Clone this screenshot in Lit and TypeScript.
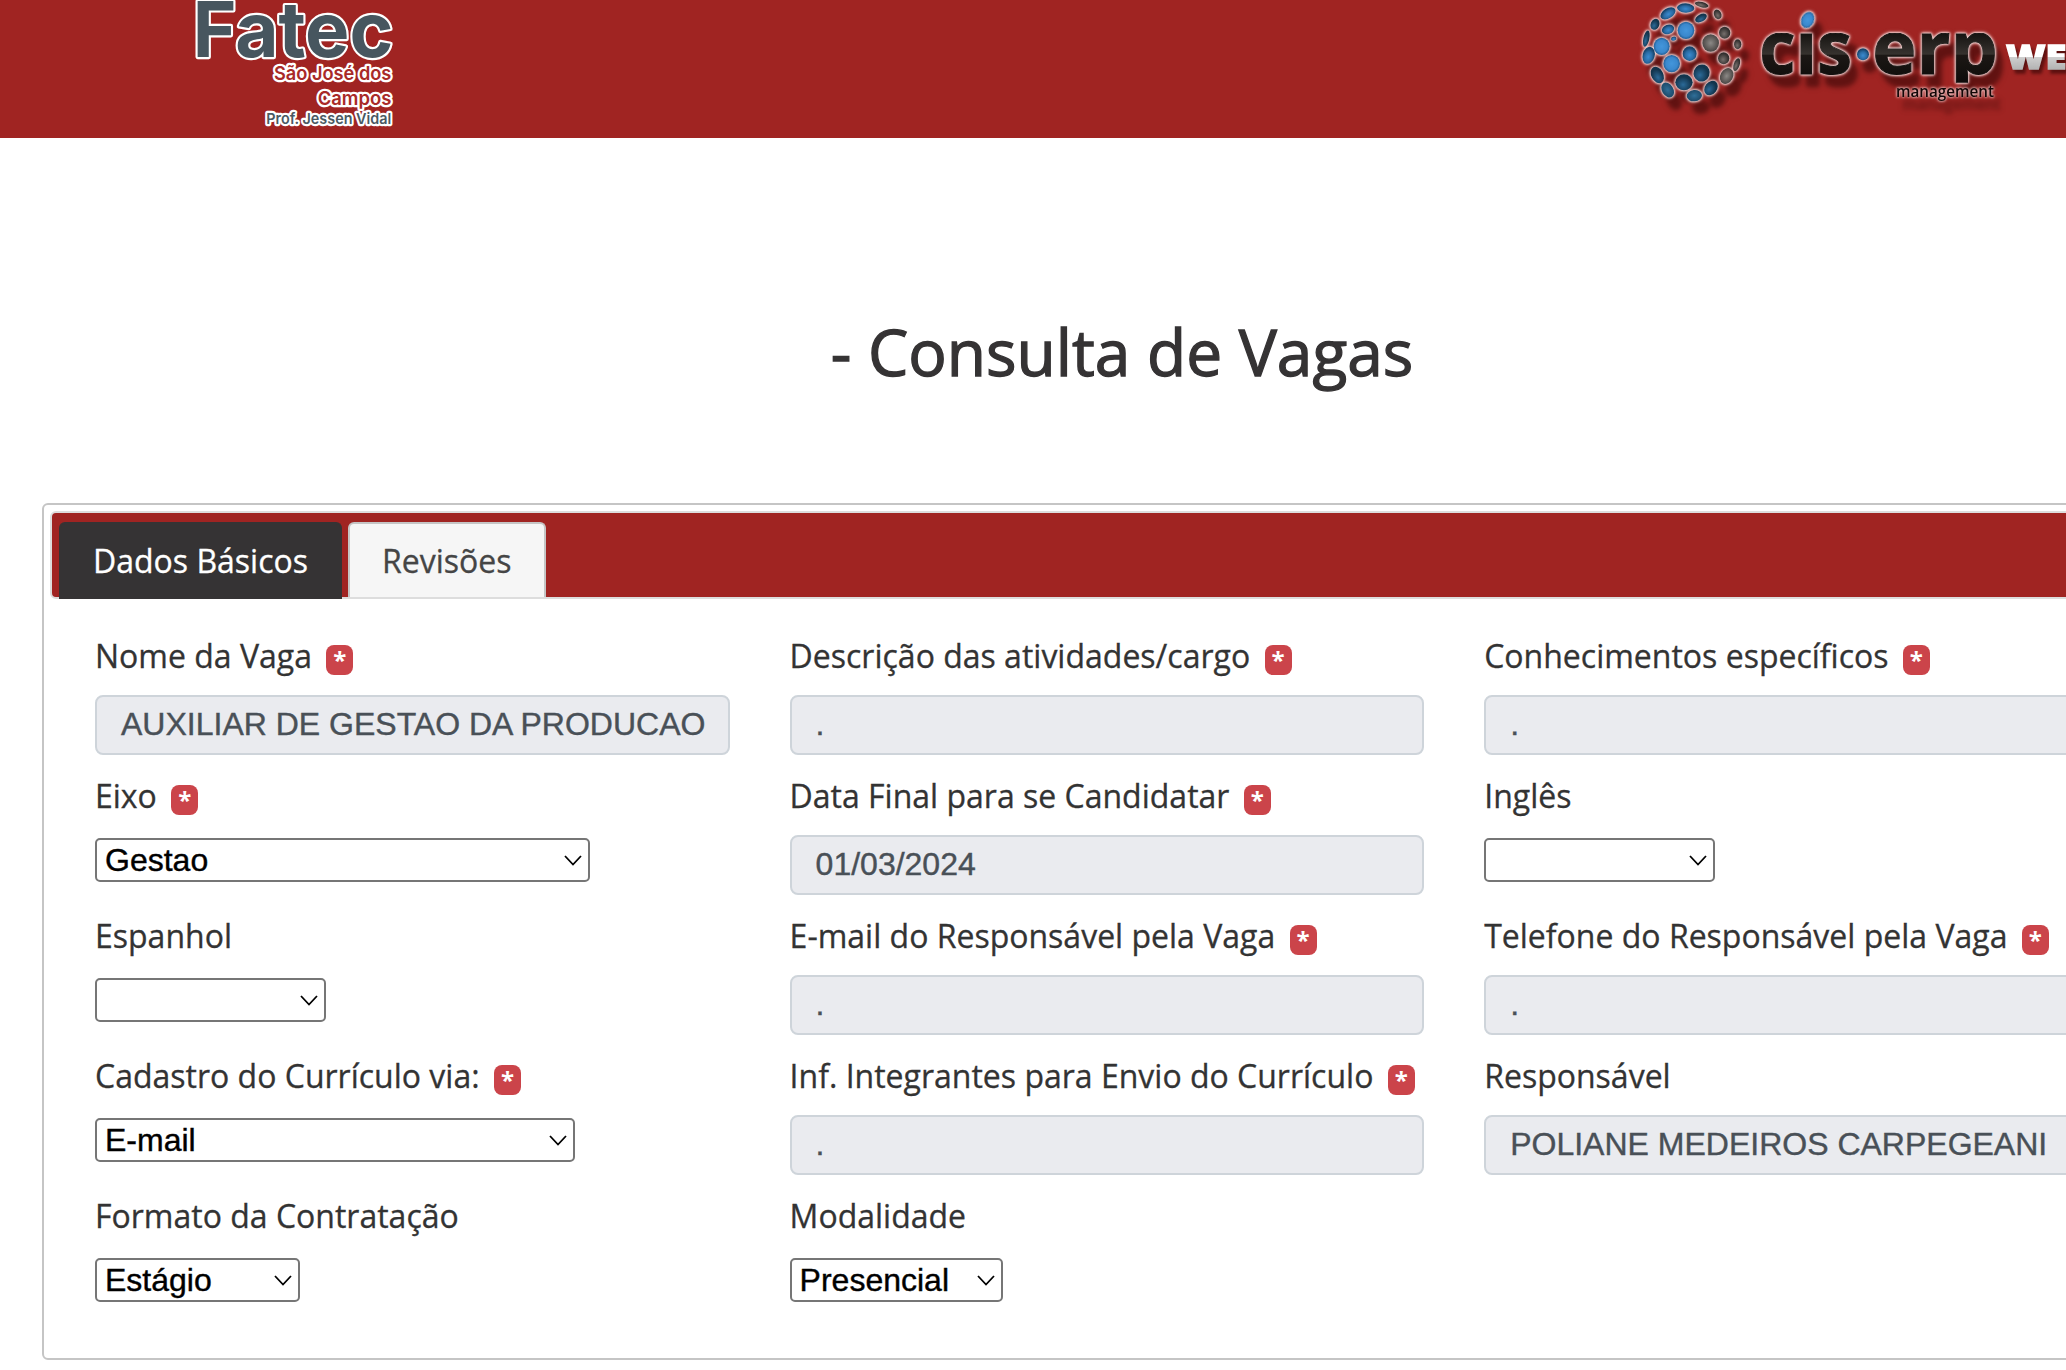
import { LitElement, html, css, svg, nothing } from "lit";
import { customElement, property } from "lit/decorators.js";

type Kind = "input" | "select";

interface Field {
  label: string;
  kind: Kind;
  value: string;
  required?: boolean;
  width?: number;
}

const FIELDS: Field[] = [
  { label: "Nome da Vaga", kind: "input", value: "AUXILIAR DE GESTAO DA PRODUCAO", required: true },
  { label: "Descrição das atividades/cargo", kind: "input", value: ".", required: true },
  { label: "Conhecimentos específicos", kind: "input", value: ".", required: true },
  { label: "Eixo", kind: "select", value: "Gestao", required: true, width: 495 },
  { label: "Data Final para se Candidatar", kind: "input", value: "01/03/2024", required: true },
  { label: "Inglês", kind: "select", value: "", width: 231 },
  { label: "Espanhol", kind: "select", value: "", width: 231 },
  { label: "E-mail do Responsável pela Vaga", kind: "input", value: ".", required: true },
  { label: "Telefone do Responsável pela Vaga", kind: "input", value: ".", required: true },
  { label: "Cadastro do Currículo via:", kind: "select", value: "E-mail", required: true, width: 480 },
  { label: "Inf. Integrantes para Envio do Currículo", kind: "input", value: ".", required: true },
  { label: "Responsável", kind: "input", value: "POLIANE MEDEIROS CARPEGEANI" },
  { label: "Formato da Contratação", kind: "select", value: "Estágio", width: 205 },
  { label: "Modalidade", kind: "select", value: "Presencial", width: 213 },
];

/* Globe dots: cx, cy, rx, ry, rotation, fill */
const DOTS: [number, number, number, number, number, string][] = [
  [197, 24, 26, 14, 3, "blue"],
  [245, 14, 21, 8, 14, "grey"],
  [144, 40, 25, 15, -32, "blue"],
  [293, 43, 11, 15, -25, "grey"],
  [243, 54, 19, 11, -28, "navy"],
  [105, 73, 13, 17, 22, "navy"],
  [144, 88, 19, 14, -20, "blue"],
  [198, 91, 25, 26, 0, "bright"],
  [79, 116, 9, 25, 12, "navy"],
  [161, 116, 8, 6, -10, "blue"],
  [272, 129, 25, 26, 0, "silver"],
  [314, 98, 17, 18, 0, "grey"],
  [353, 133, 11, 15, 0, "grey"],
  [125, 139, 24, 26, 0, "bright"],
  [86, 166, 18, 26, 15, "blue"],
  [209, 161, 21, 22, 0, "blue"],
  [155, 191, 25, 26, 0, "bright"],
  [311, 175, 17, 18, 0, "grey"],
  [350, 194, 9, 20, 18, "grey"],
  [245, 219, 24, 26, 20, "navy"],
  [112, 225, 18, 26, -28, "navy"],
  [320, 228, 19, 25, 28, "silver"],
  [192, 247, 26, 24, 0, "navy"],
  [273, 264, 18, 24, 38, "navy"],
  [143, 270, 17, 24, -32, "teal"],
  [223, 287, 23, 17, -5, "teal"],
];

@customElement("fatec-logo")
export class FatecLogo extends LitElement {
  static styles = css`
    :host { display: block; width: 230px; height: 138px; }
    svg { display: block; overflow: visible; }
    text {
      font-family: Inter, "Liberation Sans", sans-serif;
      font-weight: 600;
      paint-order: stroke;
      stroke: #fff;
      stroke-linejoin: round;
    }
    .name { font-size: 229px; font-weight: 700; fill: #47565f; stroke-width: 13px; }
    .city { font-size: 58px; fill: #a92a28; stroke-width: 14px; }
    .prof { font-size: 45px; fill: #4a5962; stroke-width: 13px; }
  `;

  render() {
    return html`
      <svg width="230" height="138" viewBox="0 0 690 414" role="img">
        <text class="name" x="38" y="172" textLength="602" lengthAdjust="spacingAndGlyphs">Fatec</text>
        <text class="city" x="282" y="241" textLength="352" lengthAdjust="spacingAndGlyphs">São José dos</text>
        <text class="city" x="413" y="314" textLength="221" lengthAdjust="spacingAndGlyphs">Campos</text>
        <text class="prof" x="259" y="372" textLength="375" lengthAdjust="spacingAndGlyphs">Prof. Jessen Vidal</text>
      </svg>
    `;
  }
}

@customElement("cis-logo")
export class CisLogo extends LitElement {
  static styles = css`
    :host { display: block; width: 500px; height: 138px; }
    svg { display: block; }
    text { font-family: "Open Sans", "Noto Sans", sans-serif; }
    .word { font-size: 222px; font-weight: 700; }
    .sub { font-size: 47px; font-weight: 600; }
    .web { font-size: 100px; font-weight: 800; }
    .lift {
      filter: drop-shadow(0 0 3px #f8e2e1) drop-shadow(0 0 3px rgba(246, 220, 219, 0.9))
        drop-shadow(0 0 4px rgba(246, 220, 219, 0.5)) drop-shadow(20px 34px 7px rgba(45, 4, 4, 0.55));
    }
    .lift-low {
      filter: drop-shadow(0 0 3px #f4d0cf) drop-shadow(0 0 4px rgba(246, 220, 219, 0.7))
        drop-shadow(20px 38px 6px rgba(45, 4, 4, 0.3));
    }
    .lift-web { filter: drop-shadow(8px 12px 5px rgba(45, 4, 4, 0.6)); }
  `;

  render() {
    return html`
      <svg width="500" height="138" viewBox="0 0 1500 414" role="img">
        <defs>
          <radialGradient id="bright"><stop offset="0" stop-color="#4396dc" /><stop offset=".7" stop-color="#3a88cd" /><stop offset="1" stop-color="#235f96" /></radialGradient>
          <radialGradient id="blue" cx=".5" cy=".6"><stop offset="0" stop-color="#3a8bd0" /><stop offset=".6" stop-color="#2a6ca5" /><stop offset="1" stop-color="#18456c" /></radialGradient>
          <radialGradient id="navy" cx=".45" cy=".65"><stop offset="0" stop-color="#2b6a98" /><stop offset="1" stop-color="#12344c" /></radialGradient>
          <radialGradient id="teal"><stop offset="0" stop-color="#2f6f99" /><stop offset="1" stop-color="#1d4a69" /></radialGradient>
          <radialGradient id="grey" cx=".45" cy=".6"><stop offset="0" stop-color="#77706d" /><stop offset="1" stop-color="#33302f" /></radialGradient>
          <radialGradient id="silver"><stop offset="0" stop-color="#8c8986" /><stop offset="1" stop-color="#4b4745" /></radialGradient>
          <linearGradient id="ink" gradientUnits="userSpaceOnUse" x1="0" y1="100" x2="0" y2="250">
            <stop offset="0" stop-color="#151311" /><stop offset=".42" stop-color="#37332f" />
            <stop offset=".43" stop-color="#1c1815" /><stop offset="1" stop-color="#0d0b0a" />
          </linearGradient>
          <linearGradient id="steel" gradientUnits="userSpaceOnUse" x1="0" y1="135" x2="0" y2="207">
            <stop offset="0" stop-color="#fff" /><stop offset=".48" stop-color="#fff" />
            <stop offset=".5" stop-color="#cfcfcf" /><stop offset="1" stop-color="#b4b4b4" />
          </linearGradient>
          <clipPath id="body"><rect x="400" y="99" width="760" height="149" /></clipPath>
        </defs>

        <g class="lift">
          ${DOTS.map(
            ([cx, cy, rx, ry, rot, fill]) => svg`
              <ellipse cx=${cx} cy=${cy} rx=${rx} ry=${ry} fill=${`url(#${fill})`}
                transform=${`rotate(${rot} ${cx} ${cy})`}></ellipse>`
          )}
        </g>
        <g class="lift">
          <g clip-path="url(#body)" fill="url(#ink)" stroke="url(#ink)" stroke-width="3">
            <text class="word" x="418" y="222" textLength="278" lengthAdjust="spacingAndGlyphs">cis</text>
            <text class="word" x="757" y="222" textLength="376" lengthAdjust="spacingAndGlyphs">erp</text>
          </g>
          <ellipse cx="563" cy="60" rx="19" ry="25" transform="rotate(24 563 60)" fill="url(#bright)" />
          <circle cx="729" cy="163" r="18" fill="url(#blue)" />
        </g>
        <text class="sub lift-low" fill="#120606" x="828" y="290" textLength="294" lengthAdjust="spacingAndGlyphs">management</text>
        <text class="web lift-web" fill="url(#steel)" stroke="url(#steel)" stroke-width="4" x="1158" y="207" textLength="258" lengthAdjust="spacingAndGlyphs">WEB</text>
      </svg>
    `;
  }
}

@customElement("form-field")
export class FormField extends LitElement {
  @property({ attribute: false }) field!: Field;

  static styles = css`
    :host { display: flex; flex-direction: column; height: 140px; min-width: 0; }
    .label {
      display: flex;
      align-items: flex-start;
      height: 48px;
      margin-bottom: 16px;
      font: 400 32px/49px "Open Sans", sans-serif;
      color: #333;
      -webkit-text-stroke: 0.3px #333;
      white-space: nowrap;
    }
    .badge {
      flex: none;
      width: 27px;
      height: 30px;
      margin: 14px 0 0 14.4px;
      border-radius: 8px;
      background: #cb444a;
      color: #fff;
      font: 700 24px/30px "Open Sans", sans-serif;
      -webkit-text-stroke: 0;
      text-align: center;
    }
    .input {
      box-sizing: border-box;
      height: 60px;
      padding: 0 24px;
      border: 2px solid #ced4da;
      border-radius: 8px;
      background: #eaebef;
      color: #495057;
      font: 32px/55px "Liberation Sans", Arial, sans-serif;
      -webkit-text-stroke: 0.4px #495057;
      white-space: nowrap;
    }
    .select {
      box-sizing: border-box;
      display: flex;
      align-items: center;
      justify-content: space-between;
      height: 44px;
      margin-top: 3px;
      padding: 0 6px 0 8px;
      border: 2px solid #767676;
      border-radius: 5px;
      background: #fff;
      color: #000;
      font: 32px/40px "Liberation Sans", Arial, sans-serif;
      -webkit-text-stroke: 0.4px #000;
    }
    .chevron { flex: none; }
  `;

  render() {
    const f = this.field;
    return html`
      <div class="label">
        <span>${f.label}</span>${f.required ? html`<span class="badge">*</span>` : nothing}
      </div>
      ${f.kind === "input"
        ? html`<div class="input">${f.value}</div>`
        : html`<div class="select" style="width:${f.width}px">
            <span>${f.value}</span>
            <svg class="chevron" width="18" height="12" viewBox="0 0 18 12">
              <path d="M1 2 9 10.5 17 2" fill="none" stroke="#000" stroke-width="1.8" />
            </svg>
          </div>`}
    `;
  }
}

@customElement("app-root")
export class AppRoot extends LitElement {
  static styles = css`
    :host {
      display: block;
      width: 100%;
      height: 1370px;
      overflow: hidden;
      background: #fff;
      font-family: "Open Sans", sans-serif;
    }
    .page { width: 2244px; }
    .header {
      display: flex;
      justify-content: space-between;
      height: 138px;
      padding: 0 124px 0 180px;
      background: #a02422;
    }
    .title {
      margin: 0;
      padding: 175px 0 113px;
      font-size: 64px;
      line-height: 77px;
      font-weight: 400;
      color: #353334;
      -webkit-text-stroke: 1.3px #353334;
      text-align: center;
    }
    .panel {
      box-sizing: border-box;
      height: 857px;
      margin: 0 42px;
      padding: 6px;
      border: 2px solid #c5c5c5;
      border-radius: 6px;
    }
    .tabs {
      box-sizing: border-box;
      display: flex;
      gap: 6px;
      height: 88px;
      padding: 9px 7px 0;
      border: 2px solid #ddd;
      border-radius: 6px;
      background: #a02422;
    }
    .tab {
      box-sizing: border-box;
      height: 75px;
      padding: 0 32px;
      border: 2px solid #c5c5c5;
      border-bottom: 0;
      border-radius: 6px 6px 0 0;
      background: #f6f6f6;
      color: #454545;
      font-size: 32px;
      line-height: 74px;
      white-space: nowrap;
      -webkit-text-stroke: 0.3px #454545;
    }
    .tab.active {
      height: 77px;
      border-color: #353334;
      background: #353334;
      color: #fff;
      -webkit-text-stroke-color: #fff;
    }
    .form {
      display: grid;
      grid-template-columns: repeat(3, 634.6px);
      column-gap: 60px;
      padding: 32px 0 0 45px;
    }
  `;

  render() {
    return html`
      <div class="page">
        <header class="header"><fatec-logo></fatec-logo><cis-logo></cis-logo></header>
        <h1 class="title">- Consulta de Vagas</h1>
        <section class="panel">
          <nav class="tabs">
            <div class="tab active">Dados Básicos</div>
            <div class="tab">Revisões</div>
          </nav>
          <div class="form">
            ${FIELDS.map((f) => html`<form-field .field=${f}></form-field>`)}
          </div>
        </section>
      </div>
    `;
  }
}
